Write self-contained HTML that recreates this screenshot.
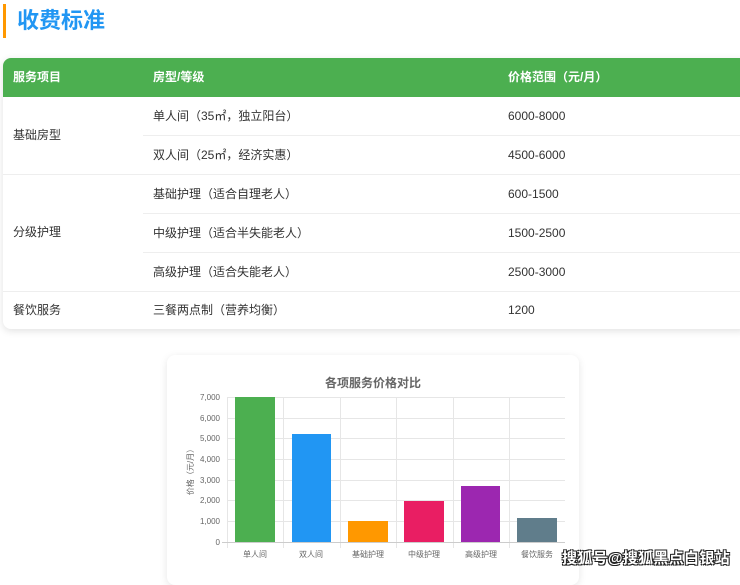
<!DOCTYPE html>
<html><head><meta charset="utf-8"><style>
*{margin:0;padding:0;box-sizing:border-box}
body{width:740px;height:573px;overflow:hidden;background:#fff;font-family:"Liberation Sans","Noto Sans CJK SC",sans-serif;position:relative;color:#333}
.title{position:absolute;left:3px;top:4px;height:34px;border-left:3px solid #ff9800;padding-left:11px;font-size:22px;font-weight:bold;color:#2196f3;line-height:34px}
.card{position:absolute;left:3px;top:58px;width:745px;height:271px;border-radius:8px;box-shadow:0 2px 8px rgba(0,0,0,.12);overflow:hidden;background:#fff}
.hd{height:39px;background:#4caf50;color:#fff;font-weight:bold;font-size:12px;position:relative}
.c{position:absolute;font-size:12px;line-height:39px;white-space:nowrap}
.row{position:absolute;left:0;right:0;height:39px;border-bottom:1px solid #eee}
.chart{position:absolute;left:167px;top:355px;width:412px;height:230px;border-radius:8px;box-shadow:0 2px 8px rgba(0,0,0,.1);background:#fff}
.wm{position:absolute;left:562px;top:547px;font-size:15px;font-weight:bold;color:#fff;letter-spacing:0.3px;text-shadow:-1px -1px 0 #222,1px -1px 0 #222,-1px 1px 0 #222,1px 1px 0 #222}
</style></head><body>
<div class="title">收费标准</div>
<div class="card">
 <div class="hd"><span class="c" style="left:10px">服务项目</span><span class="c" style="left:150px">房型/等级</span><span class="c" style="left:505px">价格范围（元/月）</span></div>
 <div class="row" style="top:39px;left:140px"></div>
 <div class="row" style="top:78px"></div>
 <div class="row" style="top:117px;left:140px"></div>
 <div class="row" style="top:156px;left:140px"></div>
 <div class="row" style="top:195px"></div>
 <span class="c" style="left:10px;top:58px">基础房型</span>
 <span class="c" style="left:10px;top:155px">分级护理</span>
 <span class="c" style="left:10px;top:233px">餐饮服务</span>
 <span class="c" style="left:150px;top:39px">单人间（35㎡，独立阳台）</span><span class="c" style="left:505px;top:39px">6000-8000</span>
 <span class="c" style="left:150px;top:78px">双人间（25㎡，经济实惠）</span><span class="c" style="left:505px;top:78px">4500-6000</span>
 <span class="c" style="left:150px;top:117px">基础护理（适合自理老人）</span><span class="c" style="left:505px;top:117px">600-1500</span>
 <span class="c" style="left:150px;top:156px">中级护理（适合半失能老人）</span><span class="c" style="left:505px;top:156px">1500-2500</span>
 <span class="c" style="left:150px;top:195px">高级护理（适合失能老人）</span><span class="c" style="left:505px;top:195px">2500-3000</span>
 <span class="c" style="left:150px;top:233px">三餐两点制（营养均衡）</span><span class="c" style="left:505px;top:233px">1200</span>
</div>
<div class="chart"></div>
<svg style="position:absolute;left:0;top:0" width="740" height="573" font-family="Liberation Sans,Noto Sans CJK SC,sans-serif">
<text x="373" y="387" text-anchor="middle" font-size="12" font-weight="bold" fill="#666">各项服务价格对比</text>
<g stroke="#e6e6e6" stroke-width="1">
<line x1="227" y1="397.5" x2="565" y2="397.5"/><line x1="227" y1="418.5" x2="565" y2="418.5"/><line x1="227" y1="438.5" x2="565" y2="438.5"/><line x1="227" y1="459.5" x2="565" y2="459.5"/><line x1="227" y1="480.5" x2="565" y2="480.5"/><line x1="227" y1="500.5" x2="565" y2="500.5"/><line x1="227" y1="521.5" x2="565" y2="521.5"/>
<line x1="227.5" y1="397" x2="227.5" y2="548"/><line x1="283.5" y1="397" x2="283.5" y2="548"/><line x1="340.5" y1="397" x2="340.5" y2="548"/><line x1="396.5" y1="397" x2="396.5" y2="548"/><line x1="453.5" y1="397" x2="453.5" y2="548"/><line x1="509.5" y1="397" x2="509.5" y2="548"/>
</g>
<line x1="222" y1="542.5" x2="565" y2="542.5" stroke="#ccc"/>
<g font-size="8" fill="#666" text-anchor="end">
<text x="220" y="400">7,000</text><text x="220" y="421">6,000</text><text x="220" y="441">5,000</text><text x="220" y="462">4,000</text><text x="220" y="483">3,000</text><text x="220" y="503">2,000</text><text x="220" y="524">1,000</text><text x="220" y="545">0</text>
</g>
<text transform="translate(193,470) rotate(-90)" text-anchor="middle" font-size="8" fill="#666">价格（元/月）</text>
<rect x="235" y="397" width="40" height="145" fill="#4caf50"/>
<rect x="292" y="434" width="39" height="108" fill="#2196f3"/>
<rect x="348" y="521" width="40" height="21" fill="#ff9800"/>
<rect x="404" y="501" width="40" height="41" fill="#e91e63"/>
<rect x="461" y="486" width="39" height="56" fill="#9c27b0"/>
<rect x="517" y="518" width="40" height="24" fill="#607d8b"/>
<g font-size="8" fill="#666" text-anchor="middle">
<text x="255" y="557">单人间</text><text x="311" y="557">双人间</text><text x="368" y="557">基础护理</text><text x="424" y="557">中级护理</text><text x="481" y="557">高级护理</text><text x="537" y="557">餐饮服务</text>
</g>
</svg>
<div class="wm">搜狐号@搜狐黑点白银站</div>
</body></html>
